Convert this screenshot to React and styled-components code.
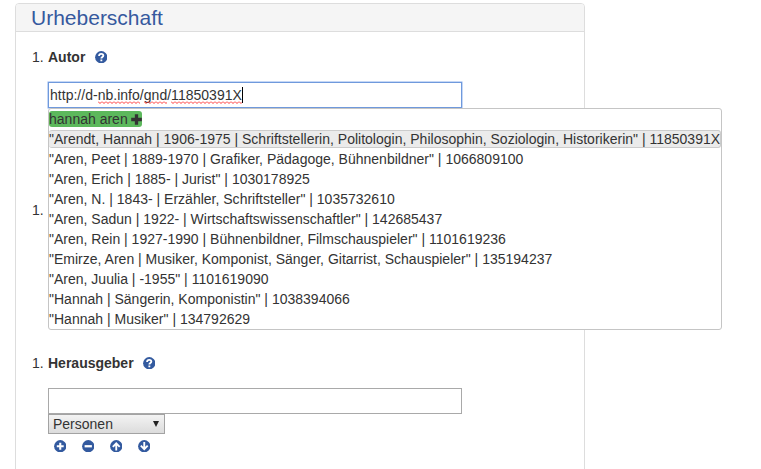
import React from 'react';
import styled, { createGlobalStyle } from 'styled-components';

const Global = createGlobalStyle`
  * { box-sizing: border-box; }
  body {
    margin: 0;
    overflow: hidden;
    background: #fff;
    color: #333;
    font: 14px/20px "Liberation Sans", Arial, sans-serif;
  }
`;

const Panel = styled.section`
  width: 570px;
  height: 480px;
  margin: 3px 0 0 15px;
  border: 1px solid #ddd;
  border-radius: 4px;
`;

const PanelHeader = styled.h3`
  height: 28px;
  margin: 0;
  padding: 0 15px;
  border-bottom: 1px solid #ddd;
  border-radius: 3px 3px 0 0;
  background: #f5f5f5;
  color: #36599e;
  font-size: 21px;
  font-weight: 400;
  line-height: 28px;
`;

const PanelBody = styled.div`
  display: flex;
  flex-direction: column;
  padding: 15px 15px 15px 32px;
`;

const Item = styled.div`
  display: flex;
  margin-bottom: ${(p) => p.$gap || 0}px;
`;

const Marker = styled.span`
  width: 16px;
  margin-left: -16px;
  flex: none;
`;

const Label = styled.strong`
  margin-right: 9.4px;
`;

const Icon = styled.svg`
  display: block;
  flex: none;
  width: ${(p) => p.$size || 12.5}px;
  height: ${(p) => p.$size || 12.5}px;
  margin-top: ${(p) => p.$top || 0}px;
`;

const InputWrap = styled.div`
  position: relative;
  width: 414px;
`;

const Input = styled.div`
  display: flex;
  align-items: center;
  height: 26px;
  padding: 0 1px;
  border: 1px solid ${(p) => (p.$focus ? '#6f99dc' : '#a9a9a9')};
  box-shadow: ${(p) => (p.$focus ? '0 0 0 0.5px #8db1ee' : 'none')};
  background: #fff;
  letter-spacing: 0.02px;
  white-space: pre;
`;

const Misspelled = styled.span`
  position: relative;
`;

const Squiggle = styled.svg`
  position: absolute;
  left: 0;
  bottom: -1px;
  width: 100%;
  height: 3px;
`;

const Caret = styled.span`
  width: 1px;
  height: 16px;
  background: #000;
`;

const Menu = styled.ul`
  position: absolute;
  z-index: 2;
  top: 26px;
  left: 0;
  width: 674px;
  margin: 0;
  padding: 0;
  list-style: none;
  border: 1px solid #c5c5c5;
  border-radius: 3px;
  background: #fff;
  letter-spacing: 0.006px;
`;

const Option = styled.li`
  display: flex;
  align-items: center;
  height: 20px;
  white-space: pre;
`;

const ActiveText = styled.span`
  width: 672px;
  height: 18px;
  border: 1px solid #ccc;
  border-left-width: 0;
  border-radius: 3px;
  background: #ebebeb;
  line-height: 16px;
`;

const Tag = styled.span`
  display: flex;
  align-items: center;
  justify-content: space-between;
  height: 16px;
  width: 93px;
  border-radius: 3px;
  background: #5cb85c;
  line-height: 16px;
`;

const TagText = styled.span`
  width: 82px;
`;

const Select = styled.div`
  display: flex;
  align-items: center;
  justify-content: space-between;
  width: 117px;
  height: 20px;
  padding: 0 4px;
  border: 1px solid #a3a3a3;
  background: linear-gradient(#f3f3f3, #dcdcdc);
`;

const Actions = styled.div`
  display: flex;
  gap: 15.5px;
  padding: 5.75px 5.5px;
`;

const shapes = {
  plus: <path d="M6 2.7v6.6M2.7 6h6.6" strokeWidth="2" />,
  minus: <path d="M2.5 6h7" strokeWidth="2.2" />,
  up: <path d="M6 10V3.3M2.7 6.6 6 3.2l3.3 3.4" strokeWidth="1.8" />,
  down: <path d="M6 2v6.7M2.7 5.4 6 8.8l3.3-3.4" strokeWidth="1.8" />,
  help: <path d="M3.9 4.8c.1-2.7 4.1-2.5 4.1-.4 0 1.4-1.9 1.3-1.9 2.9M6.1 8.1v1.7" strokeWidth="1.8" />,
};

const RoundIcon = ({ kind, top }) => (
  <Icon viewBox="0 0 12 12" $top={top}>
    <circle cx="6" cy="6" r="5.9" fill="#335a9f" />
    <g fill="none" stroke="#fff">{shapes[kind]}</g>
  </Icon>
);

const Spell = ({ children, id }) => (
  <Misspelled>
    {children}
    <Squiggle>
      <defs>
        <pattern id={id} width="4" height="3" patternUnits="userSpaceOnUse">
          <path d="M0 .5 2 2.5 4 .5" fill="none" stroke="#f33" />
        </pattern>
      </defs>
      <rect width="100%" height="3" fill={`url(#${id})`} />
    </Squiggle>
  </Misspelled>
);

const results = [
  '"Aren, Peet | 1889-1970 | Grafiker, Pädagoge, Bühnenbildner" | 1066809100',
  '"Aren, Erich | 1885- | Jurist" | 1030178925',
  '"Aren, N. | 1843- | Erzähler, Schriftsteller" | 1035732610',
  '"Aren, Sadun | 1922- | Wirtschaftswissenschaftler" | 142685437',
  '"Aren, Rein | 1927-1990 | Bühnenbildner, Filmschauspieler" | 1101619236',
  '"Emirze, Aren | Musiker, Komponist, Sänger, Gitarrist, Schauspieler" | 135194237',
  '"Aren, Juulia | -1955" | 1101619090',
  '"Hannah | Sängerin, Komponistin" | 1038394066',
  '"Hannah | Musiker" | 134792629',
];

export default function App() {
  return (
    <>
      <Global />
      <Panel>
        <PanelHeader>Urheberschaft</PanelHeader>
        <PanelBody>
          <Item $gap={15}>
            <Marker>1.</Marker>
            <Label>Autor</Label>
            <RoundIcon kind="help" top={3.75} />
          </Item>
          <Item $gap={92}>
            <InputWrap>
              <Input $focus>
                <span>http://d-<Spell id="s1">nb.info</Spell>/<Spell id="s2">gnd</Spell>/<Spell id="s3">11850391X</Spell></span>
                <Caret />
              </Input>
              <Menu>
                <Option>
                  <Tag>
                    <TagText>hannah aren</TagText>
                    <Icon viewBox="0 0 12 12" $size={11}>
                      <path d="M6 .3v11.4M.2 6h11.6" stroke="#333" strokeWidth="3.6" />
                    </Icon>
                  </Tag>
                </Option>
                <Option>
                  <ActiveText>{'"Arendt, Hannah | 1906-1975 | Schriftstellerin, Politologin, Philosophin, Soziologin, Historikerin" | 11850391X'}</ActiveText>
                </Option>
                {results.map((r) => <Option key={r}>{r}</Option>)}
              </Menu>
            </InputWrap>
          </Item>
          <Item $gap={133}><Marker>1.</Marker></Item>
          <Item $gap={15}>
            <Marker>1.</Marker>
            <Label>Herausgeber</Label>
            <RoundIcon kind="help" top={3.75} />
          </Item>
          <InputWrap><Input /></InputWrap>
          <Select>
            Personen
            <svg width="8" height="8" viewBox="0 0 8 8"><path d="M1 1h6L4 7z" fill="#222" /></svg>
          </Select>
          <Actions>
            <RoundIcon kind="plus" />
            <RoundIcon kind="minus" />
            <RoundIcon kind="up" />
            <RoundIcon kind="down" />
          </Actions>
        </PanelBody>
      </Panel>
    </>
  );
}
